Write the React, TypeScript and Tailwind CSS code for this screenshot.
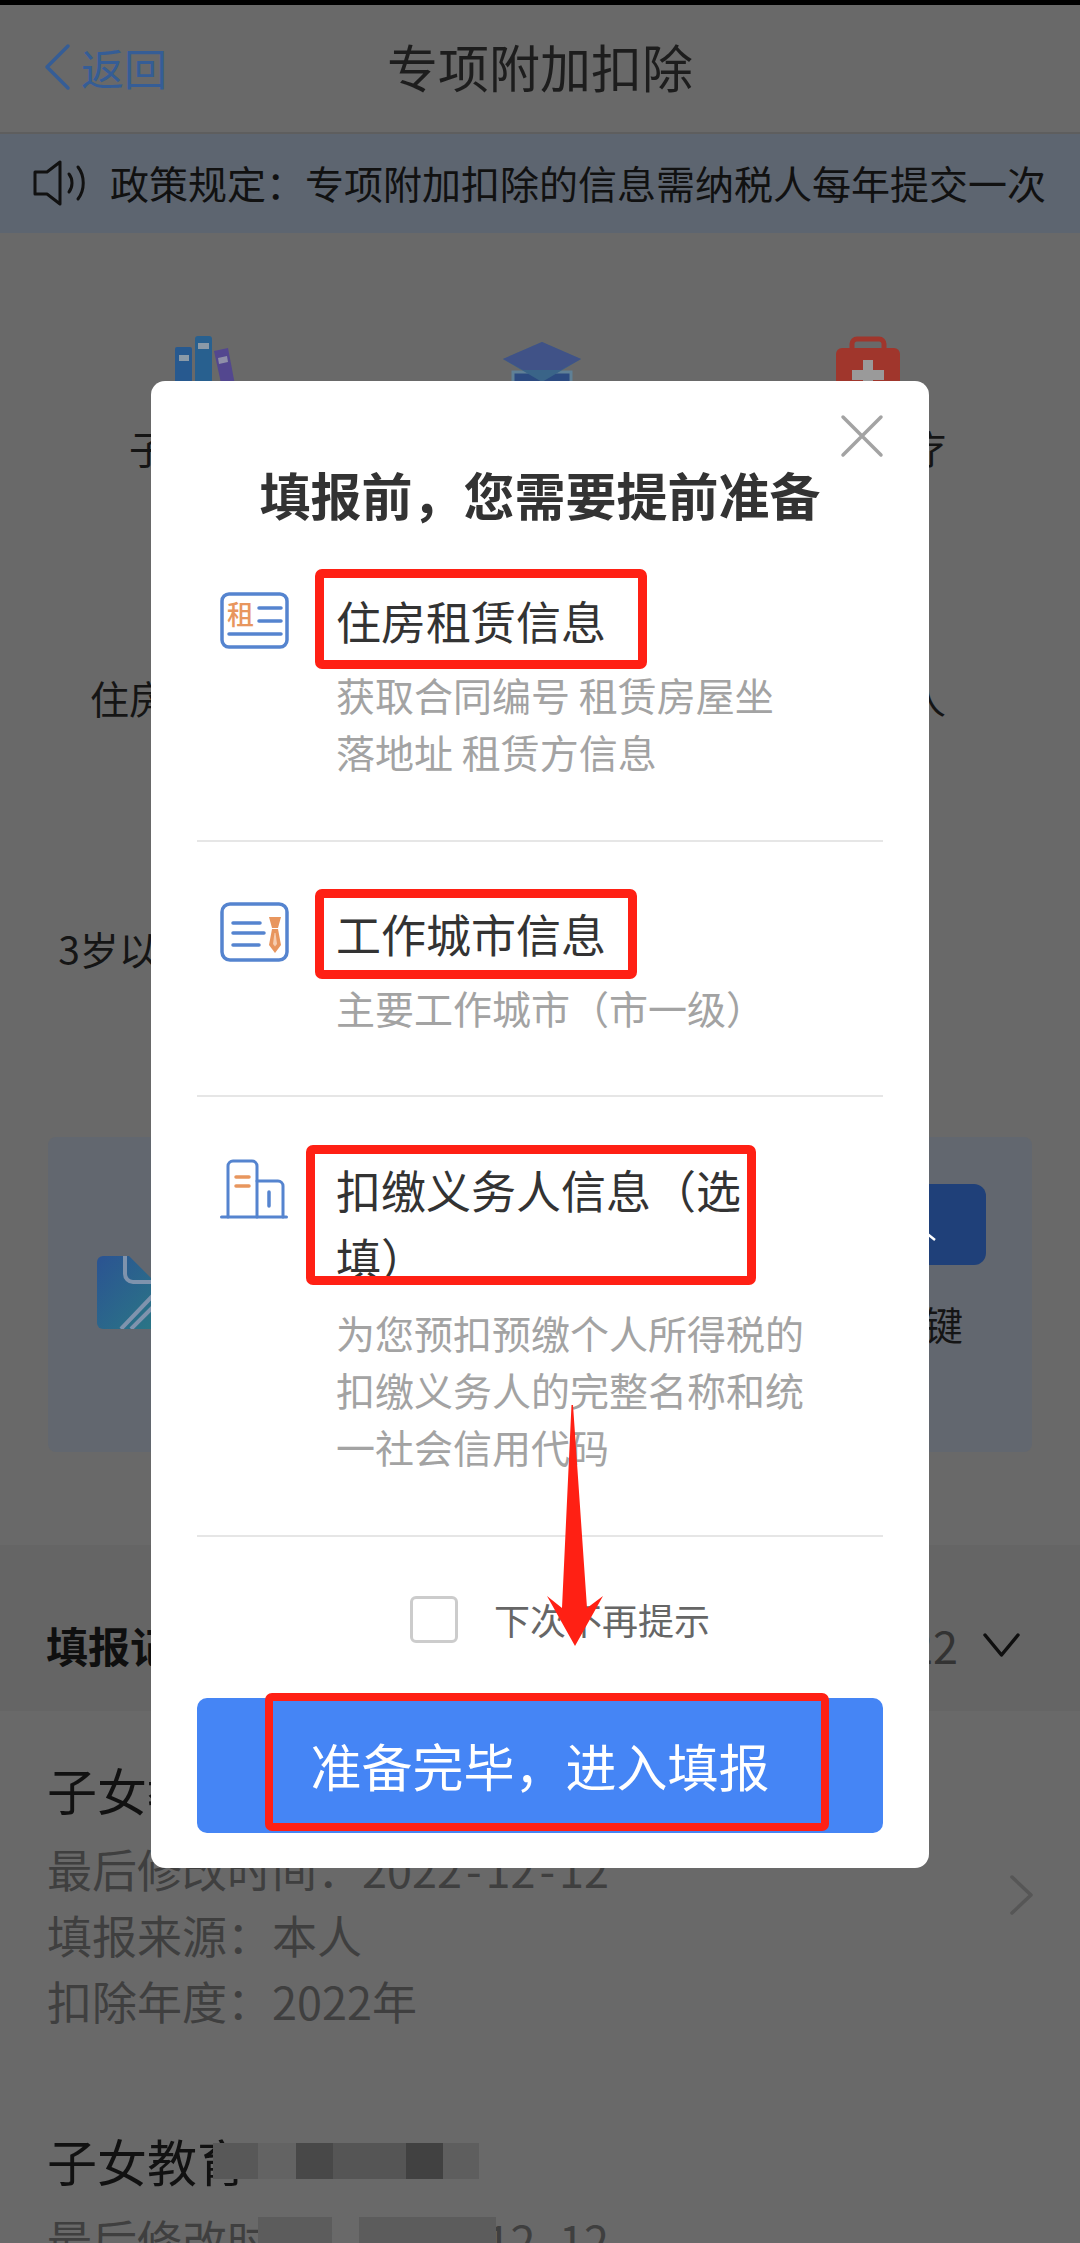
import React from 'react';

const RedBox = ({ className }: { className: string }) => (
  <div className={`absolute rounded-[7px] border-[#ff2014] ${className}`} />
);

const RentIcon = () => (
  <svg width="69" height="57" viewBox="0 0 69 57" className="shrink-0 mt-[5px]">
    <rect x="2" y="2" width="65" height="53" rx="7" fill="#fff" stroke="#5584cf" strokeWidth="3.5" />
    <text x="7" y="33" fontSize="27" fontWeight="500" fontFamily="'Noto Sans CJK SC',sans-serif" fill="#e8965e">租</text>
    <g stroke="#5584cf" strokeWidth="3.5" strokeLinecap="round">
      <path d="M39 16h22M39 29h22M9 42h52" />
    </g>
  </svg>
);

const WorkIcon = () => (
  <svg width="69" height="60" viewBox="0 0 69 60" className="shrink-0 mt-[2px]">
    <rect x="2" y="2" width="65" height="56" rx="8" fill="#fff" stroke="#5584cf" strokeWidth="3.5" />
    <g stroke="#5584cf" strokeWidth="3.5" strokeLinecap="round">
      <path d="M13 21h27M13 31h31M13 43h26" />
    </g>
    <path d="M49 15h12l-3 11h-6z" fill="#e8965e" />
    <path d="M52 27h6l3 16-6 8-6-8z" fill="#e8965e" />
    <path d="M54.500 31h1l1.500 11-2 2.500-2-2.500z" fill="#f6cdb0" />
  </svg>
);

const PayerIcon = () => (
  <svg width="69" height="60" viewBox="0 0 69 60" className="shrink-0 mt-[3px]">
    <g fill="none" stroke="#5584cf" strokeWidth="3" strokeLinecap="round" strokeLinejoin="round">
      <path d="M8 58V7a5 5 0 0 1 5-5h19a5 5 0 0 1 5 5v51" />
      <path d="M37 22h21a5 5 0 0 1 5 5v31" />
      <path d="M1.500 58h65" />
      <path d="M49 33v14" strokeWidth="3.500" />
    </g>
    <path d="M16 18h13M16 27h13" stroke="#e8965e" strokeWidth="3.500" strokeLinecap="round" />
  </svg>
);

const Books = () => (
  <svg width="66" height="70" viewBox="0 0 66 70">
    <rect x="1" y="11" width="17" height="59" rx="2" fill="#27598f" />
    <rect x="5" y="19" width="10" height="6" fill="#8b9aa8" />
    <rect x="21" y="0" width="17" height="70" rx="3" fill="#28608f" />
    <rect x="24" y="7" width="11" height="6" fill="#8b9aa8" />
    <path d="M40 15l14-3 11 58H52z" fill="#53478f" />
    <path d="M44 22l9-2 1 6-9 2z" fill="#8f8fa8" />
  </svg>
);

const Cap = () => (
  <svg width="86" height="70" viewBox="0 0 86 70" className="ml-[8px] mt-[6px] mb-[-6px]">
    <path d="M14 30h58v30H14z" fill="#2c4a80" stroke="#5f8096" strokeWidth="3" />
    <path d="M43 0l39 17-39 23L4 17z" fill="#3a6488" />
    <path d="M43 0l39 17-20 11H24L4 17z" fill="#434a88" opacity="0.7" />
  </svg>
);

const Kit = () => (
  <svg width="64" height="70" viewBox="0 0 64 70">
    <path d="M16 12V8a5 5 0 0 1 5-5h22a5 5 0 0 1 5 5v4" fill="none" stroke="#a0362c" strokeWidth="5" />
    <rect x="0" y="12" width="64" height="58" rx="6" fill="#a0362c" />
    <path d="M27 24h10v10h11v10H37v10H27V44H16V34h11z" fill="#9a9a9a" />
  </svg>
);

const DocIcon = () => (
  <svg width="70" height="73" viewBox="0 0 70 73" className="ml-[49px] mt-[119px]">
    <defs>
      <linearGradient id="doc" x1="0" y1="0" x2="1" y2="1">
        <stop offset="0" stopColor="#2b5392" />
        <stop offset="1" stopColor="#2a7885" />
      </linearGradient>
    </defs>
    <path d="M6 0h26l32 32v35a6 6 0 0 1-6 6H6a6 6 0 0 1-6-6V6a6 6 0 0 1 6-6z" fill="url(#doc)" />
    <path d="M28 0v18a8 8 0 0 0 8 8h26" fill="none" stroke="#7f93ad" strokeWidth="4" />
    <path d="M24 73l40-42M34 73l30-30" stroke="#7f93ad" strokeWidth="4" />
  </svg>
);

const Chevron = ({ className, stroke, d, w, h }: { className?: string; stroke: string; d: string; w: number; h: number }) => (
  <svg width={w} height={h} viewBox={`0 0 ${w} ${h}`} className={className} fill="none" stroke={stroke} strokeWidth="3.500" strokeLinecap="round" strokeLinejoin="round">
    <path d={d} />
  </svg>
);

const RecordLines = ({ lines }: { lines: string[] }) => (
  <div className="mt-[13px] text-[45px] leading-[66px] text-[#3f3f3f] whitespace-nowrap">
    {lines.map(line => (
      <div key={line}>
        {line.split('-').map((part, i) => (
          <React.Fragment key={i}>
            {i > 0 && <span className="mx-[4px]">-</span>}
            {part}
          </React.Fragment>
        ))}
      </div>
    ))}
  </div>
);

const Background = () => (
  <div className="flex flex-col">
    <div className="h-[5px] bg-black" />
    <header className="relative h-[129px] flex items-center justify-center pb-[6px] border-b-[2px] border-[#5e5e5e] bg-[#696969]">
      <div className="absolute left-[42px] top-[37px] flex items-center gap-[9px] text-[#355d96]">
        <Chevron w={30} h={48} stroke="#355d96" d="M26 3L5 24l21 21" />
        <span className="text-[43px] leading-[50px]">返回</span>
      </div>
      <h1 className="text-[51px] leading-[60px] font-normal text-[#1d1d1d]">专项附加扣除</h1>
    </header>
    <div className="h-[99px] flex items-center bg-[#5d6570] pl-[33px] pb-[2px] text-[39px] text-[#111]">
      <svg width="54" height="46" viewBox="0 0 54 46" fill="none" stroke="#111" strokeWidth="3" strokeLinejoin="round" strokeLinecap="round" className="shrink-0 mr-[23px]">
        <path d="M2 12h12L27 2v42L14 34H2z" />
        <path d="M36 14c4 5 4 13 0 18M45 7c7 9 7 23 0 32" />
      </svg>
      {'政策规定\uFF1A专项附加扣除的信息需纳税人每年提交一次'}
    </div>

    <div className="pt-[103px] pl-[107px] pr-[112px] flex justify-between text-[39px] leading-[50px] text-[#151515]">
      <div className="w-[200px] flex flex-col items-center">
        <Books />
        <span className="mt-[16px] mb-[3px] whitespace-nowrap">子女教育</span>
      </div>
      <div className="w-[200px] flex flex-col items-center">
        <Cap />
        <span className="mt-[16px] mb-[3px] whitespace-nowrap">继续教育</span>
      </div>
      <div className="w-[200px] flex flex-col items-center">
        <Kit />
        <span className="mt-[16px] mb-[3px] whitespace-nowrap">大病医疗</span>
      </div>
    </div>
    <div className="pt-[197px] pl-[107px] pr-[112px] flex justify-between text-[39px] leading-[50px] text-[#151515]">
      <div className="w-[200px] flex flex-col items-center"><span className="whitespace-nowrap">住房贷款利息</span></div>
      <div className="w-[200px] flex flex-col items-center"><span className="whitespace-nowrap">住房租金</span></div>
      <div className="w-[200px] flex flex-col items-center"><span className="whitespace-nowrap">赡养老人</span></div>
    </div>
    <div className="pt-[201px] pl-[125px] text-[39px] leading-[50px] text-[#151515]">
      <div className="w-[200px] flex flex-col items-center"><span className="whitespace-nowrap">3岁以下婴幼儿照护</span></div>
    </div>

    <div className="mt-[164px] mx-[48px] h-[315px] flex justify-between rounded-[8px] bg-[#62676f]">
      <DocIcon />
      <div className="mr-[46px] mt-[47px] w-[124px] flex flex-col items-center">
        <div className="w-[124px] h-[81px] flex justify-center rounded-[12px] bg-[#1f4079]">
          <svg width="14" height="14" viewBox="0 0 14 14" className="mt-[46px] ml-[12px]"><path d="M2 2l10 8" stroke="#fff" strokeWidth="2.500" /></svg>
        </div>
        <span className="mt-[33px] text-[39px] leading-[50px] text-[#151515]">一键</span>
      </div>
    </div>
    <div className="h-[93px]" />

    <div className="h-[166px] flex items-center justify-between bg-[#656565] pt-[34px] pl-[46px] pr-[60px]">
      <span className="text-[42px] leading-[50px] font-bold text-[#0f0f0f]">填报记录</span>
      <div className="flex items-center gap-[25px]">
        <span className="text-[45px] leading-[50px] text-[#333]">2022</span>
        <Chevron w={37} h={24} stroke="#0f0f0f" d="M2 2l16.500 20L35 2" />
      </div>
    </div>

    <div className="pt-[44px] pl-[47px] pr-[47px]">
      <div className="flex items-center justify-between">
        <div>
          <div className="text-[50px] leading-[68px] text-[#111]">子女教育</div>
          <RecordLines lines={['最后修改时间\uFF1A2022-12-12', '填报来源\uFF1A本人', '扣除年度\uFF1A2022年']} />
        </div>
        <Chevron w={23} h={40} stroke="#565656" d="M2 2l19 18L2 38" />
      </div>
      <div className="relative mt-[92px]">
        <div className="text-[50px] leading-[68px] text-[#111]">子女教育</div>
        <RecordLines lines={['最后修改时间\uFF1A2022-12-12']} />
        <div className="absolute left-[166px] top-[17px] h-[36px] flex">
          <div className="w-[45px] bg-[#585858]" />
          <div className="w-[38px] bg-[#636363]" />
          <div className="w-[37px] bg-[#484848]" />
          <div className="w-[73px] bg-[#555555]" />
          <div className="w-[37px] bg-[#414141]" />
          <div className="w-[36px] bg-[#5e5e5e]" />
        </div>
        <div className="absolute left-[211px] top-[91px] w-[74px] h-[30px] bg-[#5c5c5c]" />
        <div className="absolute left-[312px] top-[91px] w-[137px] h-[30px] bg-[#5c5c5c]" />
      </div>
    </div>
  </div>
);

const Modal = () => (
  <div className="absolute left-[151px] top-[381px] w-[778px] h-[1487px] rounded-[14px] bg-white">
    <svg width="44" height="44" viewBox="0 0 44 44" className="absolute left-[689px] top-[33px]" stroke="#a3a3a3" strokeWidth="3.500" strokeLinecap="round">
      <path d="M3 3l38 38M41 3L3 41" />
    </svg>
    <h2 className="pt-[78px] text-center text-[51px] leading-[70px] font-bold text-[#333]">{'填报前\uFF0C您需要提前准备'}</h2>

    <div className="mx-[46px] border-b-[2px] border-[#e6e6e6] pt-[58px] pb-[60px] pl-[23px] flex gap-[47px]">
      <RentIcon />
      <div className="w-[471px]">
        <div className="relative text-[45px] leading-[68px] text-[#333]">
          住房租赁信息
          <RedBox className="left-[-21px] top-[-18px] w-[332px] h-[100px] border-[9px]" />
        </div>
        <p className="mt-[11px] text-[39px] leading-[57px] text-[#a3a3a3]">获取合同编号 租赁房屋坐落地址 租赁方信息</p>
      </div>
    </div>

    <div className="mx-[46px] border-b-[2px] border-[#e6e6e6] pt-[58px] pb-[59px] pl-[23px] flex gap-[47px]">
      <WorkIcon />
      <div className="w-[471px]">
        <div className="relative text-[45px] leading-[68px] text-[#333]">
          工作城市信息
          <RedBox className="left-[-21px] top-[-11px] w-[322px] h-[90px] border-[9px]" />
        </div>
        <p className="mt-[11px] text-[39px] leading-[57px] text-[#a3a3a3]">{'主要工作城市\uFF08市一级\uFF09'}</p>
      </div>
    </div>

    <div className="mx-[46px] border-b-[2px] border-[#e6e6e6] pt-[59px] pb-[60px] pl-[23px] flex gap-[47px]">
      <PayerIcon />
      <div className="w-[471px]">
        <div className="relative text-[45px] leading-[68px] text-[#333]">
          {'扣缴义务人信息\uFF08选填\uFF09'}
          <RedBox className="left-[-30px] top-[-11px] w-[450px] h-[140px] border-[9px]" />
        </div>
        <p className="mt-[12px] text-[39px] leading-[57px] text-[#a3a3a3]">为您预扣预缴个人所得税的扣缴义务人的完整名称和统一社会信用代码</p>
      </div>
    </div>

    <div className="ml-[259px] mt-[59px] flex items-center gap-[36px]">
      <div className="w-[48px] h-[47px] rounded-[6px] border-[3px] border-[#cccccc]" />
      <span className="text-[36px] leading-[47px] text-[#666]">下次不再提示</span>
    </div>

    <div className="relative mx-[46px] mt-[55px] h-[135px] flex items-center justify-center rounded-[10px] bg-[#4585f5] text-[51px] text-white">
      {'准备完毕\uFF0C进入填报'}
      <RedBox className="left-[68px] top-[-5px] w-[564px] h-[138px] border-[8px]" />
    </div>
  </div>
);

export default function App() {
  return (
    <div className="relative w-[1080px] h-[2243px] overflow-hidden bg-[#696969] font-['Noto_Sans_CJK_SC',sans-serif]">
      <Background />
      <Modal />
      <svg width="60" height="245" viewBox="545 1403 60 245" className="absolute left-[545px] top-[1403px]">
        <path d="M571.500 1405h1.500L587 1608l16-12-28 50-28-50 15 12z" fill="#ff2014" />
      </svg>
    </div>
  );
}
